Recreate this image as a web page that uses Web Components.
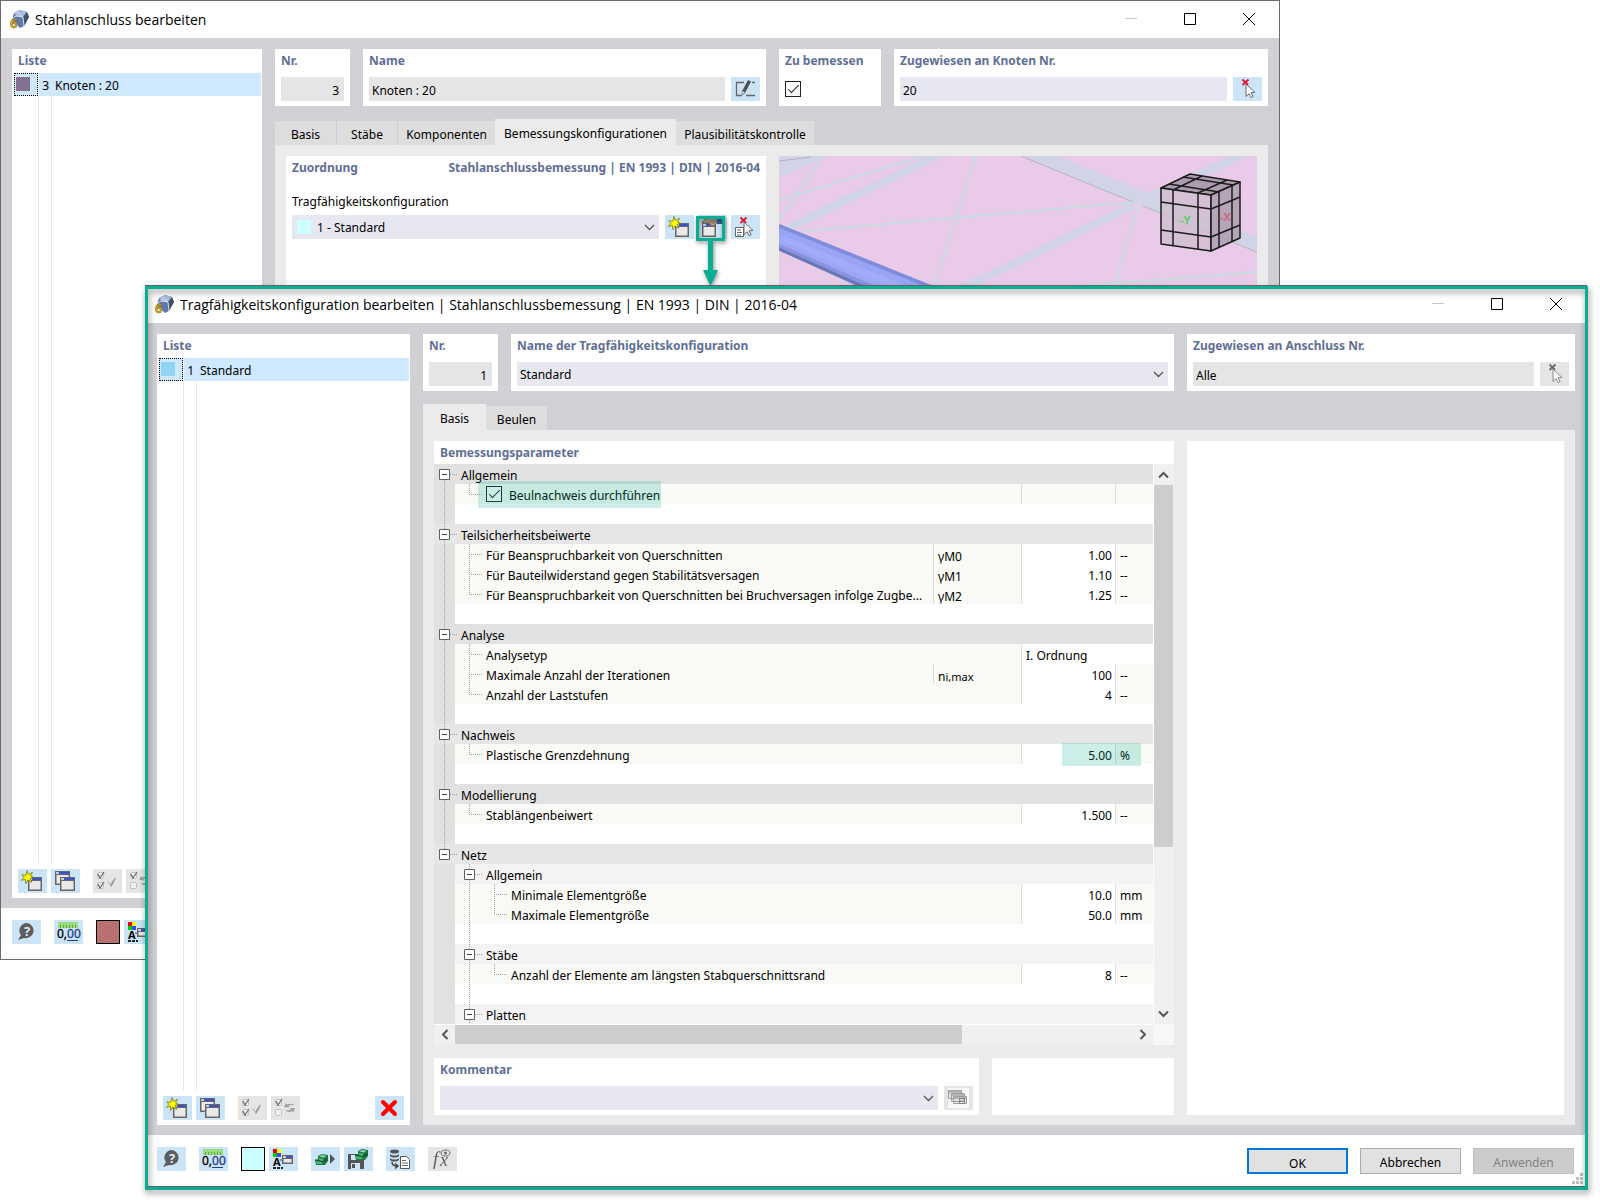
<!DOCTYPE html>
<html lang="de">
<head>
<meta charset="utf-8">
<title>Tragfähigkeitskonfiguration bearbeiten</title>
<style>
  html, body {
    margin: 0;
    height: 100%;
    background: #fff;
  }

  body {
    font: 12px/20px "Noto Sans", "Open Sans", sans-serif;
    color: #000;
    position: relative;
    overflow: hidden;
  }

  /* The two windows lie freely on the desktop */
  #joint-window {
    position: absolute;
    left: 0;
    top: 0;
    width: 80vw;
    height: 80vh;
  }

  #config-window {
    position: absolute;
    left: 145px;
    top: 285px;
    right: 13px;
    bottom: 13px;
  }

  .top-row {
    display: flex;
    gap: 13px;
  }

  .nr { flex: 0 0 75px; }
  .grow { flex: 1; }
  .check-panel { flex: 0 0 102px; }
  .joint-name { flex: 0 0 403px; }
  .config-assigned { flex: 0 0 388px; }

  .column {
    flex: 1;
    min-width: 0;
    display: flex;
    flex-direction: column;
    gap: 13px;
  }

  .line {
    display: flex;
    gap: 6px;
  }

  .line.tight { gap: 4px; }
  .line drop-down { margin-right: 2px; }

  .split {
    display: flex;
    justify-content: space-between;
    line-height: 24px;
    font-weight: bold;
    color: #5f6f98;
  }

  .caption { padding: 12px 0 3px; display: block; }
  .assign { flex: 0 0 480px; }
  .empty { background: #fff; }
  .result { flex: 0 0 377px; }
  .preview { flex: 0 0 182px; }
</style>
</head>
<body>

<app-window id="joint-window" caption="Stahlanschluss bearbeiten">
  <object-list slot="list" width="250" number="3" label="Knoten : 20" color="#84708f"></object-list>

  <div slot="head" class="top-row">
    <field-panel class="nr" label="Nr."><text-field value="3" align="right" readonly name="Nr."></text-field></field-panel>
    <field-panel class="joint-name" label="Name">
      <div class="line">
        <text-field class="grow" value="Knoten : 20" readonly name="Name"></text-field>
        <icon-button icon="edit" label="Name bearbeiten"></icon-button>
      </div>
    </field-panel>
    <field-panel class="check-panel" label="Zu bemessen"><check-box name="Zu bemessen"></check-box></field-panel>
    <field-panel class="grow" label="Zugewiesen an Knoten Nr.">
      <div class="line">
        <text-field class="grow" value="20" name="Zugewiesen an Knoten Nr."></text-field>
        <icon-button icon="pick" label="Auswählen"></icon-button>
      </div>
    </field-panel>
  </div>

  <tab-pages slot="pages" tabs="Basis:62,Stäbe:61,Komponenten:97,Bemessungskonfigurationen:181,Plausibilitätskontrolle:138" active="3">
    <field-panel class="assign">
      <div class="split"><span>Zuordnung</span><span>Stahlanschlussbemessung | EN 1993 | DIN | 2016-04</span></div>
      <span class="caption">Tragfähigkeitskonfiguration</span>
      <div class="line tight">
        <drop-down class="grow" value="1 - Standard" swatch="#ccffff" name="Tragfähigkeitskonfiguration"></drop-down>
        <icon-button icon="new" label="Neu"></icon-button>
        <call-out><icon-button icon="properties" label="Bearbeiten"></icon-button></call-out>
        <icon-button icon="pickList" label="Zuweisen"></icon-button>
      </div>
    </field-panel>
    <model-view class="grow"></model-view>
  </tab-pages>

  <tool-bar slot="footer" color="#b97070" count="4"></tool-bar>
</app-window>

<app-window id="config-window" framed caption="Tragfähigkeitskonfiguration bearbeiten | Stahlanschlussbemessung | EN 1993 | DIN | 2016-04">
  <object-list slot="list" width="253" number="1" label="Standard" color="#8fd5f3" removable></object-list>

  <div slot="head" class="top-row">
    <field-panel class="nr" label="Nr."><text-field value="1" align="right" readonly name="Nr."></text-field></field-panel>
    <field-panel class="grow" label="Name der Tragfähigkeitskonfiguration">
      <drop-down value="Standard" name="Name der Tragfähigkeitskonfiguration"></drop-down>
    </field-panel>
    <field-panel class="config-assigned" label="Zugewiesen an Anschluss Nr.">
      <div class="line">
        <text-field class="grow" value="Alle" readonly name="Zugewiesen an Anschluss Nr."></text-field>
        <icon-button icon="pick" disabled label="Auswählen"></icon-button>
      </div>
    </field-panel>
  </div>

  <tab-pages slot="pages" tabs="Basis:63,Beulen:61" active="0">
    <div class="column">
      <param-table class="grow"></param-table>
      <div class="top-row">
        <field-panel class="grow" label="Kommentar">
          <div class="line tight">
            <drop-down class="grow" value="" name="Kommentar"></drop-down>
            <icon-button icon="templates" disabled label="Vorlagen"></icon-button>
          </div>
        </field-panel>
        <div class="empty preview"></div>
      </div>
    </div>
    <div class="empty result"></div>
  </tab-pages>

  <tool-bar slot="footer" color="#ccffff" count="8" dialog></tool-bar>
</app-window>

<script>
  // Shared rules for every shadow root
  const BASE = `
    *, *::before, *::after { box-sizing: border-box; }
    :host { display: block; min-width: 0; box-sizing: border-box; }
    button, input, select { font: inherit; color: inherit; margin: 0; border: 0; border-radius: 0; padding: 0; }
    button { background: none; }
    svg { display: block; }
    h2 { margin: 0; padding: 0 6px; font-size: 12px; line-height: 24px; color: #5f6f98; white-space: nowrap; }
  `;

  const appWindowPart = (x, y, w, h) => `
    <rect x="${x}" y="${y}" width="${w}" height="${h}" fill="#666"/>
    <rect x="${x + 1}" y="${y + 1}" width="${w - 2}" height="2" fill="#c9cbe0"/>
    <rect x="${x + 4}" y="${y + 1}" width="${w - 5}" height="2" fill="#3d53c4"/>
    <rect x="${x + 1.5}" y="${y + 4}" width="${w - 3}" height="${h - 5.5}" fill="#e9e9ea"/>`;

  const tick = (x, y, on) => `
    <rect x="${x + 0.5}" y="${y + 0.5}" width="6" height="6" rx="1" fill="#f4f4f4" stroke="#b4b4b4"/>
    ${on ? `<path d="M${x + 1} ${y + 2}l2 4 4-6" fill="none" stroke="#4a4a4a" stroke-width="1.3"/>` : ''}`;

  const star = `<path d="M9 1.500l1.300 3.800 4.200-2-2 3.700 3.300 1.300-3.700 1 1.600 4-3.900-2.300-2 3.500-.4-4-4 .8 2.700-2.800-2.300-2.700 4 .5z" fill="#ff0" stroke="#77741c" stroke-width=".8"/>`;
  const arrow = `<path d="M13 7l9 8.500-4 .2 2.200 4-2 1-2-4-3.200 2.800z" fill="#fff" stroke="#6b6b6b"/>`;
  const cross = color => `<path d="M9.500 2.500l5.500 5.500M15.500 2.500L9.500 8" stroke="${color}" stroke-width="1.800"/>`;
  const cube = (x, y) => `<g transform="translate(${x} ${y})">
    <path d="M3 2l4-2 6 1v6l-3 4H1L0 6l3-1z" fill="#1f7a45"/>
    <path d="M4 2.500l3-1.500 4.500 .8L9 3.500z" fill="#8fd6ab"/>
    <path d="M4 4l4 .8V7.500L4 7zM1 7l6 1v2H1.500z" fill="#4db277"/>
    <path d="M9.500 5l3-2v3l-3 2z" fill="#185e36"/>
    <path d="M0 6l8 1.500 4-2" stroke="#104d2a" fill="none"/></g>`;

  // Glyphs on a 29 x 24 button
  const ICONS = {
    new: appWindowPart(10, 8, 14, 14) + star,
    copy: appWindowPart(4, 2, 15, 14) + appWindowPart(9, 8, 15, 14),
    checkAll: tick(4, 3, true) + tick(4, 13, true) + '<path d="M14 12.500c2 0 3 2 3.500 3.500 1-3 3-6 5.500-8-1 4-3 7-5 10-1-2-2-4-4-5.500z" fill="#7d7d7d"/>',
    checkSwap: tick(4, 3, true) + tick(4, 13, false) + '<path d="M13 11l2-4 1 1.500c3-1.500 6-1 7.500 1-2-.8-4-.7-6 .5l1 1.500zM24 12l-1.500 4.500-1.200-1.300c-3 1.200-5.500.8-7-1.200 2 .6 4 .4 5.700-.6l-1-1.400z" fill="#8a8a8a"/>',
    remove: '<path d="M8 6l12 12M20 6L8 18" stroke="#f00" stroke-width="4" stroke-linecap="round"/>',
    help: '<path d="M15 3a8 7.500 0 1 1-3 15l-6 2 3-5a8 7.500 0 0 1 6-12z" fill="#5d5d5d"/><text x="12" y="16" font-size="13" font-weight="bold" fill="#dcebf8">?</text>',
    units: '<path d="M4 2h20v6H4z" fill="#98dc7c"/><path d="M6.500 5v3M9.500 5v3M12.500 5v3M15.500 5v3M18.500 5v3M21.500 5v3" stroke="#68a850"/><text x="3" y="18" font-size="12" fill="#000" stroke="#000" stroke-width=".3">0,<tspan fill="#1f3f8f" stroke="#1f3f8f">00</tspan></text><path d="M13 20.500h11" stroke="#1f3f8f"/>',
    display: '<path d="M4 2h4v4H4z" fill="#e00"/><path d="M8 2h4v4H8z" fill="#ff0"/><path d="M4 6h4v4H4z" fill="#0c0"/><path d="M8 6h4v4H8z" fill="#44f"/><text x="4" y="19" font-size="11" font-weight="bold">A</text><path d="M4 21h10" stroke="#222" stroke-width="2" stroke-dasharray="3 1"/><path d="M11 13h3" stroke="#444"/>' + appWindowPart(13, 8, 11, 9),
    load: cube(4, 7) + '<path d="M19 7l5 5-5 5z" fill="#555"/>',
    save: '<path d="M4 7h13l3 3v12H4z" fill="#555"/><path d="M7 8h8v5H7z" fill="#cfe4f7"/><path d="M7 16h9v6H7z" fill="#cfe4f7"/><path d="M8 17h3v4H8z" fill="#555"/>' + cube(11, 2),
    script: '<g fill="#555"><ellipse cx="8.500" cy="4.500" rx="4.500" ry="2"/><path d="M4 7c2 2 7 2 9 0v2c-2 2-7 2-9 0zM4 11c2 2 7 2 9 0v2c-2 2-7 2-9 0z"/></g><path d="M6 15c0 3 2 4 5 4M9 16.500l3 2.500-3 2.500" fill="none" stroke="#444" stroke-width="1.500"/><path d="M14.500 9.500h6l3 3v9h-9z" fill="#fff" stroke="#555"/><path d="M16 13.500h4M16 16h6M16 18.500h6" stroke="#666"/>',
    formula: '<g font-family="Liberation Serif, serif" font-style="italic" fill="#333"><text x="5" y="18" font-size="19">f</text><text x="12" y="19" font-size="18">x</text></g><ellipse cx="17.500" cy="6" rx="4.500" ry="3" fill="none" stroke="#444"/><circle cx="17.500" cy="6" r="1.500" fill="#444"/>',
    edit: '<path d="M13 5.500H5.500v13H11M21 5.500h3M15 18.500h9" stroke="#666" stroke-width="1.300" fill="none"/><path d="M17 3l3 1.500L14 16l-3 2 .2-4z" fill="#4f4f4f"/><path d="M11 13.500l3 2-2.500 2z" fill="#fff" stroke="#666" stroke-width=".6"/>',
    pick: cross('#e8122a') + arrow,
    pickList: '<path d="M4.500 12.500h8v9h-8z" fill="#fff" stroke="#666"/><path d="M6 15h4M6 17.500h5M6 20h4" stroke="#666"/>' + cross('#e8122a') + arrow,
    properties: appWindowPart(4, 8, 14, 14) + '<path d="M4 8c1-3 4-5 8-5h7v4c-1 3-4 5-6 4l-2-3-4-1z" fill="#b59a83" stroke="#6f5b4b" stroke-width=".7"/><path d="M12 6l3 3M15 5l2 3" stroke="#6f5b4b" stroke-width=".7"/><path d="M19 4h5v5h-5z" fill="#3b5b9b"/>',
    templates: '<rect x="4" y="2" width="21" height="20" fill="#fff"/><g stroke="#8a8a8a" fill="#e2e2e2"><path d="M4.500 4.500h13v8h-13zM7.500 7.500h13v8h-13zM9.500 10.500h13v7h-13z"/></g><path d="M5 5h12v2H5zM8 8h12v2H8zM10 11h12v2H10z" fill="#a5a5a5"/><path d="M15.500 12.500h5v5h-5zM16 14l2 2 3-4" stroke="#666" fill="none"/>'
  };

  const LOGO = `<svg width="21" height="25" viewBox="0 -2 21 25">
    <path d="M5 4l6-3 7 2 2 5-5 9-4 2-8-8z" fill="#5d79a8"/>
    <path d="M5 4l6-3 7 2-4 5-7-1z" fill="#a9bddb"/>
    <path d="M14 8l4-5 2 5-5 9z" fill="#44506c"/>
    <path d="M3 10l4-3 7 1M8 3l6 5 1 9" stroke="#d8e2ef" fill="none"/>
    <text x="1" y="19" font-size="13" font-weight="bold" fill="#dcb531" stroke="#6b5a12" stroke-width=".5">6</text></svg>`;

  const CHEVRON = '<svg class="chevron" width="11" height="7" viewBox="0 0 11 7"><path d="M1 1l4.500 4.500L10 1" fill="none" stroke="#555" stroke-width="1.300"/></svg>';
  const CHECK_CSS = `
    input[type=checkbox] { appearance: none; width: 16px; height: 16px; border: 1px solid #222; background: #fff; display: grid; place-items: center; }
    input[type=checkbox]:checked::before { content: ""; width: 11px; height: 5px; border: solid #222; border-width: 0 0 1px 1px; transform: translateY(-2px) rotate(-45deg); }
  `;

  class AppWindow extends HTMLElement {
    connectedCallback() {
      this.attachShadow({ mode: 'open' }).innerHTML = `
        <style>
          ${BASE}
          :host { display: flex; flex-direction: column; border: 1px solid #6b6b6d; background: #fff; }
          header { display: flex; align-items: center; height: 37px; flex: none; padding: 0 1px 0 8px; gap: 5px; }
          h1 { flex: 1; margin: 0; font: 14px/20px "Open Sans", sans-serif; }
          .controls { display: flex; align-self: flex-start; }
          .controls button { width: 59px; height: 35px; display: grid; place-items: center; }
          main { flex: 1; min-height: 0; display: flex; gap: 13px; padding: 11px 11px 10px; background: #d1d0d5; }
          .side { flex: 1; min-width: 0; display: flex; flex-direction: column; gap: 13px; }
          ::slotted([slot=pages]) { flex: 1; min-height: 0; }
          footer { height: 51px; flex: none; }
          /* Frame with a shadow on both of its sides */
          :host([framed])::after {
            content: ""; position: absolute; top: 0; right: -2px; bottom: -4px; left: -1px;
            border: 3px solid #08ae91; filter: drop-shadow(1px 3px 3px rgba(0, 0, 0, .5)); pointer-events: none;
          }
        </style>
        <header>
          ${LOGO}
          <h1>${this.getAttribute('caption')}</h1>
          <div class="controls">
            <button aria-label="Minimieren"><svg width="12" height="12"><path d="M0 5.500h12" stroke="#c8c8c8"/></svg></button>
            <button aria-label="Maximieren"><svg width="12" height="12"><path d="M.5.500h11v11H.5z" fill="none" stroke="#000"/></svg></button>
            <button aria-label="Schließen"><svg width="12" height="12"><path d="M0 0l12 12M12 0L0 12" stroke="#000"/></svg></button>
          </div>
        </header>
        <main>
          <slot name="list"></slot>
          <div class="side"><slot name="head"></slot><slot name="pages"></slot></div>
        </main>
        <footer><slot name="footer"></slot></footer>`;
    }
  }

  class IconButton extends HTMLElement {
    connectedCallback() {
      const off = this.hasAttribute('disabled');
      this.attachShadow({ mode: 'open' }).innerHTML = `
        <style>
          ${BASE}
          :host { flex: none; }
          button { display: block; width: 29px; height: 24px; background: #cce4f7; }
          button:disabled { background: #e5e5e5; }
          button:disabled svg { filter: grayscale(1); opacity: .75; }
        </style>
        <button aria-label="${this.getAttribute('label')}" ${off ? 'disabled' : ''}>
          <svg width="29" height="24" viewBox="0 0 29 24">${ICONS[this.getAttribute('icon')]}</svg>
        </button>`;
    }
  }

  class FieldPanel extends HTMLElement {
    connectedCallback() {
      const label = this.getAttribute('label');
      this.attachShadow({ mode: 'open' }).innerHTML = `
        <style>
          ${BASE}
          :host { background: #fff; padding: 0 6px 5px; }
          h2 { padding: 0; margin-bottom: 4px; }
        </style>
        ${label ? `<h2>${label}</h2>` : ''}<slot></slot>`;
    }
  }

  class TextField extends HTMLElement {
    connectedCallback() {
      const ro = this.hasAttribute('readonly');
      this.attachShadow({ mode: 'open' }).innerHTML = `
        <style>
          ${BASE}
          input { display: block; width: 100%; height: 24px; padding: 2px 5px 0 3px; background: ${ro ? '#e5e5e5' : '#e7e7f2'}; text-align: ${this.getAttribute('align') || 'left'}; }
        </style>
        <input type="text" aria-label="${this.getAttribute('name')}" value="${this.getAttribute('value')}" ${ro ? 'readonly' : ''}>`;
    }
  }

  class CheckBox extends HTMLElement {
    connectedCallback() {
      this.attachShadow({ mode: 'open' }).innerHTML = `
        <style>${BASE} ${CHECK_CSS} :host { padding: 4px 0; }</style>
        <input type="checkbox" checked aria-label="${this.getAttribute('name')}">`;
    }
  }

  class DropDown extends HTMLElement {
    connectedCallback() {
      const swatch = this.getAttribute('swatch');
      this.attachShadow({ mode: 'open' }).innerHTML = `
        <style>
          ${BASE}
          :host { display: grid; align-items: center; background: #e7e7f2; height: 24px; }
          select, .swatch, .chevron { grid-area: 1 / 1; }
          select { appearance: none; background: none; width: 100%; height: 24px; padding: 2px 0 0 ${swatch ? 25 : 3}px; }
          .swatch { width: 14px; height: 14px; margin-left: 5px; background: ${swatch}; }
          .chevron { justify-self: end; margin-right: 4px; pointer-events: none; }
        </style>
        ${swatch ? '<span class="swatch"></span>' : ''}
        <select aria-label="${this.getAttribute('name')}"><option>${this.getAttribute('value')}</option></select>
        ${CHEVRON}`;
    }
  }

  class ObjectList extends HTMLElement {
    connectedCallback() {
      this.attachShadow({ mode: 'open' }).innerHTML = `
        <style>
          ${BASE}
          :host { flex: 0 0 ${this.getAttribute('width')}px; display: flex; flex-direction: column; background: #fff; padding-bottom: 5px; }
          .items { flex: 1; display: grid; grid-template-columns: 25px 13px 1fr; grid-template-rows: 23px 1fr; padding: 0 1px 0 2px; line-height: 21px; }
          .items > * { border-right: 1px solid #e5e5e5; padding-top: 2px; background: #cde8ff; white-space: nowrap; }
          .items > :nth-child(3n) { border: 0; }
          .items > :nth-child(n+4) { background: none; }
          .items .mark { width: 24px; padding: 3px 1px; border: 1px dotted #000; }
          .mark i { display: block; width: 14px; height: 14px; background: ${this.getAttribute('color')}; }
          .num { text-align: right; padding-right: 2px; }
          .name { padding-left: 3px; }
          nav { display: flex; gap: 4px; padding: 6px 6px 0; }
          .gap { width: 5px; }
          .fill { flex: 1; }
        </style>
        <h2>Liste</h2>
        <div class="items">
          <span class="mark"><i></i></span><span class="num">${this.getAttribute('number')}</span><span class="name">${this.getAttribute('label')}</span>
          <span></span><span></span><span></span>
        </div>
        <nav>
          <icon-button icon="new" label="Neu"></icon-button>
          <icon-button icon="copy" label="Kopieren"></icon-button>
          <span class="gap"></span>
          <icon-button icon="checkAll" disabled label="Alle wählen"></icon-button>
          <icon-button icon="checkSwap" disabled label="Auswahl umkehren"></icon-button>
          <span class="fill"></span>
          ${this.hasAttribute('removable') ? '<icon-button icon="remove" label="Löschen"></icon-button>' : ''}
        </nav>`;
    }
  }

  class TabPages extends HTMLElement {
    connectedCallback() {
      const active = Number(this.getAttribute('active'));
      const tabs = this.getAttribute('tabs').split(',').map((t, i) => {
        const [text, width] = t.split(':');
        return `<button role="tab" aria-selected="${i === active}" style="width:${width}px">${text}</button>`;
      }).join('');
      this.attachShadow({ mode: 'open' }).innerHTML = `
        <style>
          ${BASE}
          :host { display: flex; flex-direction: column; }
          [role=tablist] { display: flex; align-items: flex-end; height: 26px; }
          button { height: 24px; padding-top: 4px; background: #dddddd; border-right: 1px solid #cfcfd2; white-space: nowrap; text-align: center; }
          button[aria-selected=true] { height: 26px; background: #ebebeb; border: 0; }
          button:has(+ [aria-selected=true]), button:last-child { border: 0; }
          .page { flex: 1; min-height: 0; display: flex; gap: 13px; padding: 11px 11px 10px; background: #ebebeb; }
        </style>
        <div role="tablist">${tabs}</div>
        <div class="page"><slot></slot></div>`;
    }
  }

  // Rows of the sheet. type: g = group, s = sub-group, r = value row, blank = spacer
  const ROWS = [
    { type: 'g', text: 'Allgemein' },
    { type: 'r', text: 'Beulnachweis durchführen', check: true, last: true },
    { type: 'blank' },
    { type: 'g', text: 'Teilsicherheitsbeiwerte' },
    { type: 'r', text: 'Für Beanspruchbarkeit von Querschnitten', symbol: 'γM0', value: '1.00', unit: '--' },
    { type: 'r', text: 'Für Bauteilwiderstand gegen Stabilitätsversagen', symbol: 'γM1', value: '1.10', unit: '--' },
    { type: 'r', text: 'Für Beanspruchbarkeit von Querschnitten bei Bruchversagen infolge Zugbe...', symbol: 'γM2', value: '1.25', unit: '--', last: true },
    { type: 'blank' },
    { type: 'g', text: 'Analyse' },
    { type: 'r', text: 'Analysetyp', choice: 'I. Ordnung' },
    { type: 'r', text: 'Maximale Anzahl der Iterationen', symbol: 'n<small>i,max</small>', value: '100', unit: '--' },
    { type: 'r', text: 'Anzahl der Laststufen', value: '4', unit: '--', last: true },
    { type: 'blank' },
    { type: 'g', text: 'Nachweis' },
    { type: 'r', text: 'Plastische Grenzdehnung', value: '5.00', unit: '%', marked: true, last: true },
    { type: 'blank' },
    { type: 'g', text: 'Modellierung' },
    { type: 'r', text: 'Stablängenbeiwert', value: '1.500', unit: '--', last: true },
    { type: 'blank' },
    { type: 'g', text: 'Netz', end: true },
    { type: 's', text: 'Allgemein' },
    { type: 'r', deep: true, text: 'Minimale Elementgröße', value: '10.0', unit: 'mm' },
    { type: 'r', deep: true, text: 'Maximale Elementgröße', value: '50.0', unit: 'mm', last: true },
    { type: 'blank', deep: true },
    { type: 's', text: 'Stäbe' },
    { type: 'r', deep: true, text: 'Anzahl der Elemente am längsten Stabquerschnittsrand', value: '8', unit: '--', last: true },
    { type: 'blank', deep: true },
    { type: 's', text: 'Platten' }
  ];

  class ParamTable extends HTMLElement {
    tree(row, first) {
      const sub = row.type === 's' || row.deep;
      const head = row.type === 'g' || row.type === 's';
      const lines = [];
      let width = 27;
      if (row.type === 'g') {
        lines.push(`M10.500 ${first ? 10 : 0}V${row.end ? 10 : 20}M16 10.500H24`);
      } else {
        width = row.deep ? 77 : 52;
        lines.push(sub ? 'M35.500 0V20' : 'M10.500 0V20');
        if (row.type === 's') lines.push('M41 10.500H49');
        if (row.type === 'r') {
          const x = row.deep ? 60 : 35;
          lines.push(`M${x}.500 0V${row.last ? 10 : 20}M${x} 10.500h13`);
        }
      }
      return `<span class="tree ${row.type}">
        <svg width="${width}" height="20"><path d="${lines.join('')}" stroke="#a0a0a0" stroke-dasharray="1 1" fill="none"/></svg>
        ${head ? '<button aria-label="Zuklappen"><svg width="11" height="11"><path d="M.5.500h10v10H.5z" fill="#fff" stroke="#606060"/><path d="M3 5.500h5" stroke="#444"/></svg></button>' : ''}
      </span>`;
    }

    row(row, i) {
      const name = text => `<span class="name">${this.tree(row, i === 0)}${text}</span>`;
      if (row.type === 'g' || row.type === 's') {
        return `<tr class="${row.type}"><th colspan="4">${name(row.text)}</th></tr>`;
      }
      if (row.type === 'blank') {
        return `<tr class="blank"><td colspan="4">${name('')}</td></tr>`;
      }
      if (row.check) {
        return `<tr class="r"><td colspan="2">${name(`<label><input type="checkbox" checked><span>${row.text}</span></label>`)}</td><td class="cell"></td><td class="unit"></td></tr>`;
      }
      let html = `<td colspan="${row.symbol ? 1 : 2}">${name(row.text)}</td>`;
      if (row.symbol) html += `<td class="symbol">${row.symbol}</td>`;
      if (row.choice) return `<tr class="r">${html}<td class="choice" colspan="2">${row.choice}</td></tr>`;
      return `<tr class="r">${html}<td class="value ${row.marked ? 'marked' : ''}">${row.value}</td><td class="unit">${row.unit}</td></tr>`;
    }

    connectedCallback() {
      this.attachShadow({ mode: 'open' }).innerHTML = `
        <style>
          ${BASE} ${CHECK_CSS}
          :host { display: flex; flex-direction: column; background: #fff; min-height: 0; }
          h2 { height: 23px; }
          .view { flex: 1; min-height: 0; display: grid; grid-template: 1fr 21px / 1fr 21px; }
          .sheet { overflow: hidden; }
          table { width: 100%; table-layout: fixed; border-collapse: separate; border-spacing: 0; line-height: 16px; }
          td, th { padding: 0; height: 20px; font-weight: normal; text-align: left; white-space: nowrap; }
          .g { background: #e1e1e1; }
          .g.odd { background: #e6e6e6; }
          .s { background: #f3f3f3; }
          .r { background: #f9faf5; }
          .name { display: flex; height: 20px; line-height: 24px; }
          .tree { display: grid; height: 20px; background: linear-gradient(to right, #e1e1e1 21px, transparent 21px); }
          .tree.g { background: none; }
          .tree > * { grid-area: 1 / 1; }
          .tree button { margin: 5px 0 0 5px; width: 11px; height: 11px; }
          .tree.s button { margin-left: 30px; }
          .symbol, .cell, .unit, .value, .choice { border-left: 1px solid #dcdcdc; padding: 4px 0 0 4px; }
          .symbol { padding-top: 6px; line-height: 14px; }
          .symbol small { font-size: 11px; line-height: 10px; }
          .value { background: #fff; text-align: right; padding-right: 3px; }
          .choice { background: #fff; }
          label { display: flex; align-items: center; gap: 7px; height: 20px; position: relative; padding-right: 1px; }
          label span { padding-top: 3px; }
          label::after, .marked::after { content: ""; position: absolute; background: rgba(8, 174, 145, .21); pointer-events: none; }
          label::after { inset: -3px 0 -4px -8px; }
          .marked { position: relative; }
          .marked::after { inset: -1px -26px -2px 40px; }
          .bar { display: flex; justify-content: space-between; align-items: flex-start; background: #f0f0f0; }
          .bar button { display: grid; place-items: center; flex: none; }
          .v { flex-direction: column; border-left: 1px solid #fff; }
          .h { border-top: 1px solid #fff; }
          .v button { width: 19px; height: 21px; }
          .h button { width: 21px; height: 19px; }
          .thumb { background: #cdcdcd; }
          .v .thumb { flex: 0 1 362px; width: 19px; margin-bottom: auto; }
          .h .thumb { flex: 0 1 507px; height: 19px; margin-right: auto; }
          .corner { background: #f7f7f7; }
        </style>
        <h2>Bemessungsparameter</h2>
        <div class="view">
          <div class="sheet">
            <table>
              <colgroup><col><col style="width:88px"><col style="width:94px"><col style="width:38px"></colgroup>
              <tbody>${ROWS.map((r, i) => this.row(r, i)).join('')}</tbody>
            </table>
          </div>
          <div class="bar v">
            <button aria-label="Nach oben"><svg width="11" height="8"><path d="M1 6.500L5.500 2 10 6.500" fill="none" stroke="#555" stroke-width="2"/></svg></button>
            <span class="thumb"></span>
            <button aria-label="Nach unten"><svg width="11" height="8"><path d="M1 1.500L5.500 6 10 1.500" fill="none" stroke="#555" stroke-width="2"/></svg></button>
          </div>
          <div class="bar h">
            <button aria-label="Nach links"><svg width="8" height="11"><path d="M6.500 1L2 5.500 6.500 10" fill="none" stroke="#555" stroke-width="2"/></svg></button>
            <span class="thumb"></span>
            <button aria-label="Nach rechts"><svg width="8" height="11"><path d="M1.500 1L6 5.500 1.500 10" fill="none" stroke="#555" stroke-width="2"/></svg></button>
          </div>
          <div class="corner"></div>
        </div>`;

      // Top groups take turns between two greys
      this.shadowRoot.querySelectorAll('tr.g').forEach((tr, i) => tr.classList.toggle('odd', i % 2 === 1));
    }
  }

  // 3D view of the joint with the navigation cube
  class ModelView extends HTMLElement {
    connectedCallback() {
      this.attachShadow({ mode: 'open' }).innerHTML = `
        <style>${BASE} :host { background: #e9cae8; overflow: hidden; }</style>
        <svg width="100%" viewBox="0 0 478 400">
          <path d="M0 0h47l-12 6-35 16z" fill="#d1d4e6"/>
          <path d="M0 5L32 1" stroke="#b5b0b8"/>
          <g stroke="#d1d4e6" stroke-width="8">
            <path d="M0 77L165-4M182 133L355 49M371 41L470-4"/>
          </g>
          <g stroke="#c8dde2" stroke-width="2">
            <path d="M44 0L0 65M0 44L148-1M25 75L357 46M197 0L155 130M360 47L335 130M300 130L478 116"/>
          </g>
          <path d="M242 0h36l200 81v15z" fill="#d1d4e6"/>
          <path d="M242 0l112 46M364 50l114 46" stroke="#b7b4ba"/>
          <path d="M0 68L370 217v50L0 94z" fill="#a3abf7"/>
          <path d="M0 70L370 219" stroke="#7f8bdb" stroke-width="4"/>
          <path d="M0 75L370 224" stroke="#99a4f4" stroke-width="6"/>
          <path d="M0 86L370 246" stroke="#9ca6f2" stroke-width="4"/>
          <path d="M0 90L370 252" stroke="#8994e0" stroke-width="4"/>
          <path d="M0 93L370 258" stroke="#6a75b4" stroke-width="3"/>
          <g stroke="#1c1c1c" stroke-width="1.500" stroke-linejoin="round">
            <path d="M382 32l29-14 50 8-29 13z" fill="#a597a8" fill-opacity=".9"/>
            <path d="M382 32l50 7v56l-50-7z" fill="#cdbccf" fill-opacity=".75"/>
            <path d="M432 39l29-13v56l-29 13z" fill="#ad9fb0" fill-opacity=".85"/>
            <path d="M382 46l50 7 29-12M382 74l50 7 29-12M394 34v56M419 37v56M440 35v56M453 29v56" fill="none"/>
            <path d="M390 28l50 8M404 21l50 8M394 34l29-14M419 37l29-13" fill="none"/>
          </g>
          <g font-size="11" font-weight="bold">
            <text x="401" y="68" fill="#62c76e">-Y</text>
            <text x="441" y="65" fill="#c96b80">-X</text>
          </g>
        </svg>`;
    }
  }

  // Frame round a control with an arrow to the window that it opens
  class CallOut extends HTMLElement {
    connectedCallback() {
      this.attachShadow({ mode: 'open' }).innerHTML = `
        <style>
          ${BASE}
          :host { position: relative; }
          svg { position: absolute; left: -2px; top: 1px; overflow: visible; filter: drop-shadow(1px 2px 2px rgba(0, 0, 0, .45)); pointer-events: none; }
        </style>
        <slot></slot>
        <svg width="29" height="70">
          <path d="M1.500 1.500h26v22h-26z" fill="none" stroke="#08ae91" stroke-width="3"/>
          <path d="M12 25h5v29h5l-7.500 16L7 54h5z" fill="#08ae91"/>
        </svg>`;
    }
  }

  class ToolBar extends HTMLElement {
    connectedCallback() {
      const tools = [
        ['help', 'Hilfe'], ['units', 'Einheiten'], ['swatch', 'Farbe'], ['display', 'Darstellung'],
        ['load', 'Laden'], ['save', 'Speichern'], ['script', 'Skript'], ['formula', 'Formel']
      ].slice(0, Number(this.getAttribute('count')));
      const joined = ['display', 'save'];
      const buttons = tools.map(([icon, label]) => {
        const cls = joined.includes(icon) ? 'class="joined"' : '';
        if (icon === 'swatch') return `<button class="swatch" aria-label="${label}"></button>`;
        return `<icon-button ${cls} icon="${icon}" label="${label}" ${icon === 'formula' ? 'disabled' : ''}></icon-button>`;
      }).join('');
      this.attachShadow({ mode: 'open' }).innerHTML = `
        <style>
          ${BASE}
          :host { display: flex; gap: 13px; padding: 12px 12px 0 11px; }
          .joined { margin-left: -9px; }
          .swatch { width: 24px; height: 24px; border: 1px solid #000; background: ${this.getAttribute('color')}; }
          .answers { margin: 1px 0 0 auto; display: flex; gap: 12px; }
          .answers button { width: 101px; height: 26px; padding-top: 4px; background: #e1e1e1; border: 1px solid #adadad; }
          .answers .default { border: 2px solid #0078d7; }
          .answers button:disabled { background: #ccc; border-color: #bfbfbf; color: #838383; }
          .grip { position: absolute; right: 3px; bottom: 2px; }
        </style>
        ${buttons}
        ${this.hasAttribute('dialog') ? `
          <div class="answers">
            <button class="default">OK</button><button>Abbrechen</button><button disabled>Anwenden</button>
          </div>
          <svg class="grip" width="11" height="11" fill="#bdbdbd"><path d="M8 0h3v3H8zM4 4h3v3H4zM8 4h3v3H8zM0 8h3v3H0zM4 8h3v3H4zM8 8h3v3H8z"/></svg>` : ''}`;
    }
  }

  customElements.define('icon-button', IconButton);
  customElements.define('app-window', AppWindow);
  customElements.define('field-panel', FieldPanel);
  customElements.define('text-field', TextField);
  customElements.define('check-box', CheckBox);
  customElements.define('drop-down', DropDown);
  customElements.define('object-list', ObjectList);
  customElements.define('tab-pages', TabPages);
  customElements.define('param-table', ParamTable);
  customElements.define('model-view', ModelView);
  customElements.define('call-out', CallOut);
  customElements.define('tool-bar', ToolBar);
</script>
</body>
</html>
